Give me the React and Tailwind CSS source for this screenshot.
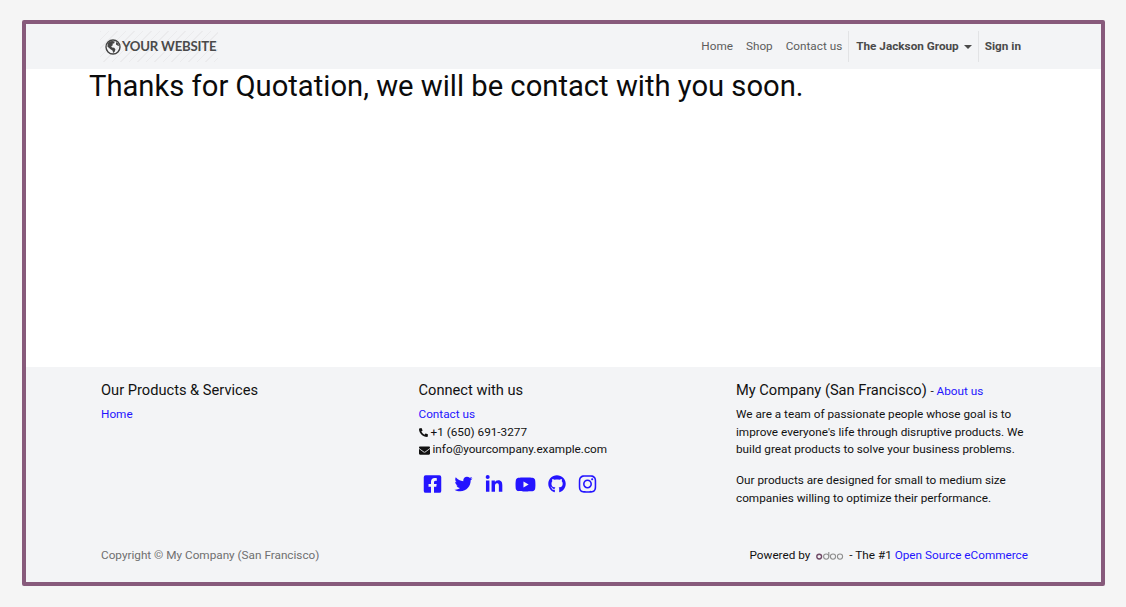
import React from 'react';
import { FaFacebookSquare, FaTwitter, FaLinkedinIn, FaYoutube, FaGithub, FaInstagram, FaPhoneAlt, FaEnvelope } from 'react-icons/fa';

const link = 'text-[#2414ff]';

const GlobeLogo = () => (
  <svg width="16" height="16" viewBox="0 0 16 16" className="shrink-0">
    <circle cx="8" cy="8" r="7" fill="none" stroke="#444" strokeWidth="1.4" />
    <path d="M4 2.6 7.2 2l2.6.6-.6 1.6-1.7.5.3 1.5-1.6 1 .8 1.3 2.2.2 1.2 1.5-.7 2.6-1.4 1.2-.8-2.6-2-1.2L2.4 7.5l.3-2.6z" fill="#444" />
    <path d="m11 3 2.2 1.4 1 2.6-1.8-.4-1.4-1.2z" fill="#444" />
  </svg>
);

const OdooLogo = () => (
  <svg width="28" height="8" viewBox="0 0 28 8" className="shrink-0">
    <circle cx="3.2" cy="4.6" r="2.4" fill="none" stroke="#714b67" strokeWidth="1.4" />
    <circle cx="10.2" cy="4.6" r="2.6" fill="none" stroke="#8f8f8f" strokeWidth="1.1" />
    <path d="M12.8 0v4.6" fill="none" stroke="#8f8f8f" strokeWidth="1.1" />
    <circle cx="17" cy="4.6" r="2.6" fill="none" stroke="#8f8f8f" strokeWidth="1.1" />
    <circle cx="24" cy="4.6" r="2.6" fill="none" stroke="#8f8f8f" strokeWidth="1.1" />
  </svg>
);

const Header = () => (
  <header className="h-[45px] shrink-0 bg-[#f3f4f6] flex items-center pl-[74px] pr-[80px] justify-between">
    <div className="h-[31px] w-[118px] flex items-center gap-[1px] pl-[5px] whitespace-nowrap bg-[repeating-linear-gradient(135deg,#ebebed_0px,#ebebed_1px,#f3f4f6_1px,#f3f4f6_6px)]">
      <GlobeLogo />
      <span className="font-['Lato',sans-serif] text-[13.2px] font-bold text-[#4a4a4a] tracking-[-0.2px]">YOUR WEBSITE</span>
    </div>
    <nav className="flex items-center text-[11.75px] text-[#5c5c5c] h-[31px]">
      <span className="mr-[13px]">Home</span>
      <span className="mr-[13px]">Shop</span>
      <span className="mr-[6px]">Contact us</span>
      <div className="h-[31px] border-l border-[#e2e3e5] flex items-center pl-[7px] pr-[6px] font-bold text-[#4a4a4a]">
        The Jackson Group
        <span className="ml-[5px] w-0 h-0 border-x-[4px] border-x-transparent border-t-[4px] border-t-[#4a4a4a]" />
      </div>
      <div className="h-[31px] border-l border-[#e2e3e5] flex items-center pl-[6px] font-bold text-[#4a4a4a]">Sign in</div>
    </nav>
  </header>
);

const Footer = () => (
  <footer className="flex-1 bg-[#f3f4f6] text-[11.75px] leading-[17.7px] text-[#111] pl-[75px] pr-[73px] flex flex-col">
    <div className="grid grid-cols-[317.5px_317.5px_1fr] pt-[13px]">
      <section>
        <h5 className="text-[14.65px] leading-[20px] mb-[6px]">Our Products &amp; Services</h5>
        <a className={link}>Home</a>
      </section>
      <section>
        <h5 className="text-[14.65px] leading-[20px] mb-[6px]">Connect with us</h5>
        <a className={`block ${link}`}>Contact us</a>
        <div className="flex items-center gap-[3px]"><FaPhoneAlt className="w-[9px] h-[9px]" />+1 (650) 691-3277</div>
        <div className="flex items-center gap-[3px]"><FaEnvelope className="w-[11px] h-[11px]" />info@yourcompany.example.com</div>
        <div className={`flex items-center gap-[12px] mt-[15px] ml-[4px] ${link}`}>
          <FaFacebookSquare className="w-[19px] h-[20px]" />
          <FaTwitter className="w-[19px] h-[18px]" />
          <FaLinkedinIn className="w-[18px] h-[19px]" />
          <FaYoutube className="w-[21px] h-[19px]" />
          <FaGithub className="w-[18px] h-[18px]" />
          <FaInstagram className="w-[19px] h-[20px]" />
        </div>
      </section>
      <section className="w-[290px]">
        <h5 className="text-[14.65px] leading-[20px] mb-[5px] whitespace-nowrap">
          My Company (San Francisco) <span className="text-[11.75px]">- <a className={link}>About us</a></span>
        </h5>
        <p className="mb-[13px]">We are a team of passionate people whose goal is to improve everyone's life through disruptive products. We build great products to solve your business problems.</p>
        <p>Our products are designed for small to medium size companies willing to optimize their performance.</p>
      </section>
    </div>
    <div className="mt-auto pb-[17px] flex justify-between items-center">
      <span className="text-[#6f6f6f]">Copyright © My Company (San Francisco)</span>
      <span className="flex items-center">
        Powered by <span className="ml-[6px] mr-[5px]"><OdooLogo /></span> - The #1&nbsp;<a className={link}>Open Source eCommerce</a>
      </span>
    </div>
  </footer>
);

export default function App() {
  return (
    <div className="w-[1126px] h-[607px] bg-[#f5f5f5] pl-[22px] pt-[20px] font-['Roboto',sans-serif]">
      <div className="w-[1083px] h-[566px] border-[4px] border-[#875a7b] rounded-[2px] bg-white flex flex-col overflow-hidden">
        <Header />
        <main className="h-[298px] shrink-0 bg-white pl-[63px]">
          <h1 className="text-[29.2px] leading-[34px] text-[#0b0b0b]">Thanks for Quotation, we will be contact with you soon.</h1>
        </main>
        <Footer />
      </div>
    </div>
  );
}
